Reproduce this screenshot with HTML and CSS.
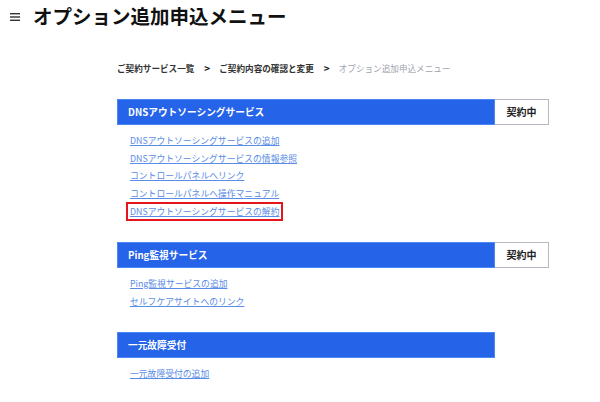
FILE: index.html
```html
<!DOCTYPE html>
<html lang="ja">
<head>
    <meta charset="UTF-8">
    <meta name="viewport" content="width=device-width, initial-scale=1.0">
    <title>オプション追加申込メニュー</title>
    <link rel="stylesheet" href="styles.css">
</head>
<body>
    <header class="page-header">
        <svg class="menu-icon" width="10" height="8" viewBox="0 0 10 8">
            <rect x="0" y="0" width="10" height="1.4" fill="#333"/>
            <rect x="0" y="3.3" width="10" height="1.4" fill="#333"/>
            <rect x="0" y="6.6" width="10" height="1.4" fill="#333"/>
        </svg>
        <h1>オプション追加申込メニュー</h1>
    </header>

    <main class="content">
        <!-- パンくずリスト -->
        <nav class="breadcrumb">
            <a href="#">ご契約サービス一覧</a>
            <span class="sep">&gt;</span>
            <a href="#">ご契約内容の確認と変更</a>
            <span class="sep">&gt;</span>
            <span class="current">オプション追加申込メニュー</span>
        </nav>

        <!-- DNSアウトソーシング -->
        <section class="service">
            <div class="service-head">
                <h2 class="service-title">DNSアウトソーシングサービス</h2>
                <span class="status">契約中</span>
            </div>
            <ul class="links">
                <li><a href="#">DNSアウトソーシングサービスの追加</a></li>
                <li><a href="#">DNSアウトソーシングサービスの情報参照</a></li>
                <li><a href="#">コントロールパネルへリンク</a></li>
                <li><a href="#">コントロールパネルへ操作マニュアル</a></li>
                <li><a href="#" class="marked">DNSアウトソーシングサービスの解約</a></li>
            </ul>
        </section>

        <!-- Ping監視 -->
        <section class="service">
            <div class="service-head">
                <h2 class="service-title">Ping監視サービス</h2>
                <span class="status">契約中</span>
            </div>
            <ul class="links">
                <li><a href="#">Ping監視サービスの追加</a></li>
                <li><a href="#">セルフケアサイトへのリンク</a></li>
            </ul>
        </section>

        <!-- 一元故障受付 -->
        <section class="service">
            <div class="service-head">
                <h2 class="service-title">一元故障受付</h2>
            </div>
            <ul class="links">
                <li><a href="#">一元故障受付の追加</a></li>
            </ul>
        </section>
    </main>
</body>
</html>
```

FILE: styles.css
```css
/* 全体 */
body {
    margin: 0;
    background-color: #fff;
    font-family: "Noto Sans CJK JP", "Noto Sans", sans-serif;
    color: #222;
}

.page-header {
    display: flex;
    align-items: center;
    padding: 3px 0 0 10px;
    height: 26px;
}

.menu-icon {
    margin-right: 13px;
    margin-top: 2px;
}

.page-header h1 {
    margin: 0;
    font-size: 19.5px;
    font-weight: 700;
    color: #111;
    line-height: 26px;
}

.content {
    width: 432px;
    margin-left: 117px;
}

/* パンくず */
.breadcrumb {
    display: flex;
    align-items: center;
    margin-top: 31px;
    font-size: 8.6px;
    line-height: 16px;
    font-weight: 700;
}

.breadcrumb a {
    color: #333;
    text-decoration: none;
}

.breadcrumb .sep {
    margin: 0 9px 0 10px;
    font-size: 10px;
    color: #222;
}

.breadcrumb .current {
    color: #a0a4ad;
    font-weight: 400;
}

/* サービス枠 */
.service {
    margin-top: 22px;
}

.breadcrumb + .service {
    margin-top: 23px;
}

.service-head {
    display: flex;
    height: 26px;
}

.service-title {
    box-sizing: border-box;
    width: 378px;
    margin: 0;
    padding-left: 10px;
    background-color: #2563e8;
    border: 1px solid #4c86f2;
    color: #fff;
    font-size: 9.7px;
    font-weight: 700;
    line-height: 24px;
}

.status {
    box-sizing: border-box;
    width: 54px;
    border: 1px solid #b5b9c2;
    border-left: none;
    background-color: #fff;
    color: #222;
    font-size: 10px;
    font-weight: 700;
    text-align: center;
    line-height: 24px;
}

.links {
    list-style: none;
    margin: 0;
    padding: 7px 0 0 13px;
}

.links li {
    height: 17.6px;
    line-height: 17.6px;
    font-size: 8.8px;
}

.links a {
    color: #5a8ce6;
    text-decoration: underline;
}

.links a.marked {
    display: inline-block;
    margin-left: -4px;
    padding: 0 2px;
    border: 2px solid #e5161b;
    line-height: 15px;
    vertical-align: top;
}
```
